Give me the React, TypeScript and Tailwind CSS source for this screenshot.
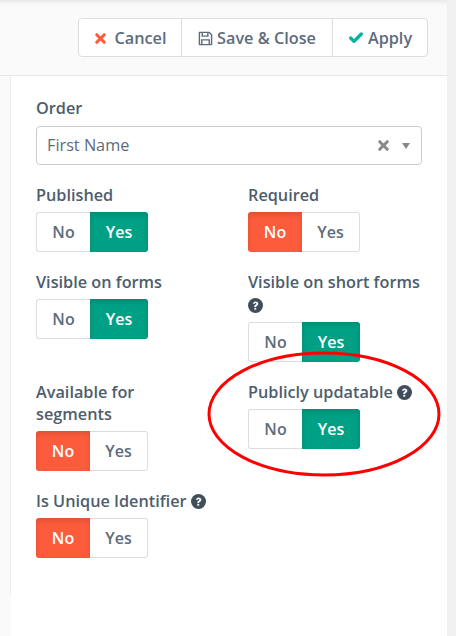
import { Check, X } from 'lucide-react';
import { ReactNode } from 'react';

function HelpIcon() {
    return (
        <svg viewBox="0 0 24 24" className="inline-block h-[15px] w-[15px] align-[-2px]">
            <circle cx="12" cy="12" r="12" fill="#404e5c" />
            <path
                d="M7.800 9.300c.2-2.400 2-3.900 4.400-3.900 2.500 0 4.300 1.500 4.300 3.600 0 1.600-1 2.500-2.100 3.200-1 .6-1.300 1-1.300 1.800v.4h-3v-.6c0-1.500.7-2.300 1.800-3 .9-.6 1.500-1 1.500-1.700 0-.7-.6-1.200-1.300-1.200-.9 0-1.400.5-1.500 1.400z"
                fill="#fff"
            />
            <rect x="10.100" y="15.700" width="3" height="3" fill="#fff" />
        </svg>
    );
}

// floppy disk, outlined the way the toolbar draws it
function SaveIcon() {
    return (
        <svg viewBox="0 0 16 16" className="h-[15px] w-[15px] shrink-0" fill="none" stroke="#5d6c7c" strokeWidth="1.500">
            <path d="M1.500 1.500h10.500l2.500 2.500v10.500h-13z" strokeLinejoin="round" />
            <path d="M4.500 1.500v4h6v-4" />
            <path d="M4 14.500v-5h8v5" />
        </svg>
    );
}

function Toggle({ value }: { value: 'no' | 'yes' }) {
    const off = 'bg-white text-[#5d6c7c] border border-[#ddd]';
    const on = 'text-white shadow-[inset_0_3px_5px_rgba(0,0,0,0.125)]';
    return (
        <div className="flex h-10 w-[112px] text-[16px] font-semibold">
            <div
                className={`flex w-[54px] items-center justify-center rounded-l-[3px] ${
                    value === 'no' ? `bg-[#fd5c3c] ${on}` : `${off} border-r-0`
                }`}
            >
                No
            </div>
            <div
                className={`flex flex-1 items-center justify-center rounded-r-[3px] ${
                    value === 'yes' ? `bg-[#00a085] ${on}` : `${off} border-l-0`
                }`}
            >
                Yes
            </div>
        </div>
    );
}

function Field({ label, value }: { label: ReactNode; value: 'no' | 'yes' }) {
    return (
        <div className="mb-[19px]">
            <div className="mb-[5.5px] w-[176px] text-[16.25px] leading-[22.5px] font-semibold text-[#4e5d6c]">{label}</div>
            <Toggle value={value} />
        </div>
    );
}

export default function App() {
    return (
        <div
            className="relative h-[636px] w-[456px] overflow-hidden bg-[#f0f0f0] text-[#4e5d6c]"
            style={{ fontFamily: '"Open Sans", sans-serif' }}
        >
            <div className="h-full w-[447px] bg-[#fafafa]">
                <div className="flex h-[76px] items-start justify-end border-b border-[#e7e7e7] pt-[18px] pr-[19px] shadow-[inset_0_6px_6px_-6px_rgba(0,0,0,0.15)]">
                    <div className="flex h-[39px] rounded-[4px] border border-[#ddd] bg-white text-[16.25px] font-semibold text-[#5d6c7c]">
                        <div className="flex w-[103px] items-center justify-center gap-[6px] border-r border-[#ddd] pt-px">
                            <X size={15} strokeWidth={5} className="text-[#fd5c3c]" />
                            Cancel
                        </div>
                        <div className="flex w-[151px] items-center justify-center gap-[4px] border-r border-[#ddd] pt-px">
                            <SaveIcon />
                            Save &amp; Close
                        </div>
                        <div className="flex w-[94px] items-center justify-center gap-[4px] pt-px">
                            <Check size={16} strokeWidth={5} className="text-[#00b49c]" />
                            Apply
                        </div>
                    </div>
                </div>

                <div className="ml-[10px] h-[519px] border-l border-[#ededed] bg-white pt-[21px] pl-[25px]">
                    <div className="mb-[6.5px] text-[16.25px] leading-[22.5px] font-semibold">Order</div>
                    <div className="mb-[19px] flex h-[39px] w-[386px] items-center rounded-[4px] border border-[#ccc] bg-white pr-[11px] pl-[10px] text-[16.25px] text-[#5d6c7c]">
                        <span className="flex-1">First Name</span>
                        <X size={15} strokeWidth={5} className="text-[#8a8a8a]" />
                        <span className="ml-[11px] h-0 w-0 border-x-[4px] border-t-[6px] border-x-transparent border-t-[#888]" />
                    </div>

                    <div className="grid grid-cols-[212px_1fr]">
                        <Field label="Published" value="yes" />
                        <Field label="Required" value="no" />
                        <Field label="Visible on forms" value="yes" />
                        <Field
                            label={
                                <>
                                    Visible on short forms <HelpIcon />
                                </>
                            }
                            value="yes"
                        />
                        <Field label="Available for segments" value="no" />
                        <Field
                            label={
                                <>
                                    Publicly updatable <HelpIcon />
                                </>
                            }
                            value="yes"
                        />
                        <Field
                            label={
                                <>
                                    Is Unique Identifier <HelpIcon />
                                </>
                            }
                            value="no"
                        />
                    </div>
                </div>
                <div className="ml-[11px] h-[41px] bg-white" />
            </div>

            {/* hand-drawn annotation over the form */}
            <svg className="pointer-events-none absolute top-[350px] left-[205px] h-[130px] w-[240px]" viewBox="0 0 240 130">
                <ellipse cx="119" cy="64" rx="115" ry="61" fill="none" stroke="#f00" strokeWidth="3" />
            </svg>
        </div>
    );
}
